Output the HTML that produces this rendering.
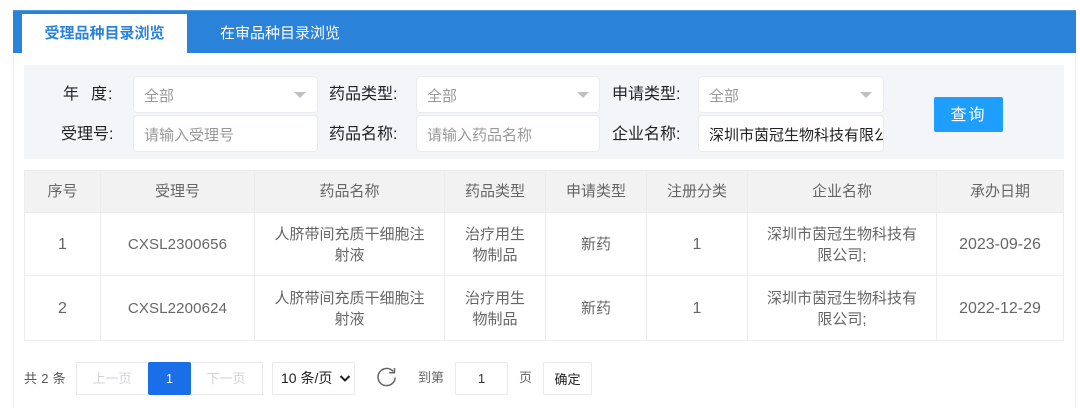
<!DOCTYPE html>
<html lang="zh"><head><meta charset="utf-8"><style>
html,body{margin:0;padding:0;background:#fff}
body{width:1080px;height:408px;position:relative;overflow:hidden;font-family:"Liberation Sans","Noto Sans CJK SC",sans-serif;color:#333;filter:blur(.3px)}
.a{position:absolute;box-sizing:border-box}
.t{position:absolute;white-space:nowrap;text-align:center}
.f{background:#fff;border:1px solid #e8eaee;border-radius:4px;font-size:15px;line-height:39px;padding-left:10px;color:#999;overflow:hidden;white-space:nowrap}
.c{position:absolute;border-left:6px solid transparent;border-right:6px solid transparent;border-top:6px solid #c0c0c0}
.l{position:absolute;font-size:16px;line-height:20px;color:#222;white-space:nowrap}
.v{position:absolute;background:#ececec;width:1px;top:170px;height:170px}
.h{position:absolute;background:#ececec;height:1px;left:24px;width:1040px}
.cell{position:absolute;font-size:15px;line-height:21px;color:#666;text-align:center}
.n{font-size:15px;letter-spacing:.15px}
.hd{position:absolute;font-size:15px;line-height:22px;color:#666;text-align:center;top:181px}
</style></head><body>
<div class="a" style="left:13px;top:10px;width:1063px;height:398px;border-left:1px solid #e6eefa;border-right:1px solid #e6eefa"></div>
<div class="a" style="left:13px;top:10px;width:1063px;height:43px;background:#2b82d9;border-top:1px solid #4f97e0"></div>
<div class="a" style="left:22px;top:14px;width:165px;height:39px;background:#fff"></div>
<div class="t" style="left:22px;top:22px;width:165px;font-size:15px;line-height:24px;color:#2b82d9;font-weight:700">受理品种目录浏览</div>
<div class="t" style="left:187px;top:22px;width:186px;font-size:15px;line-height:24px;color:#fff">在审品种目录浏览</div>

<div class="a" style="left:24px;top:65px;width:1040px;height:94px;background:#f4f5f9"></div>
<div class="l" style="left:63px;top:85px">年<span style="margin-left:12px">度</span><span style="margin-left:1px">:</span></div>
<div class="l" style="left:61px;top:125px">受理号:</div>
<div class="l" style="left:329px;top:85px">药品类型:</div>
<div class="l" style="left:329px;top:125px">药品名称:</div>
<div class="l" style="left:612px;top:85px">申请类型:</div>
<div class="l" style="left:612px;top:125px">企业名称:</div>
<div class="a f" style="left:133px;top:76px;width:185px;height:37px">全部</div>
<div class="a f" style="left:416px;top:76px;width:184px;height:37px">全部</div>
<div class="a f" style="left:698px;top:76px;width:186px;height:37px">全部</div>
<div class="c" style="left:294px;top:92px"></div>
<div class="c" style="left:577px;top:92px"></div>
<div class="c" style="left:860px;top:92px"></div>
<div class="a f" style="left:133px;top:115px;width:185px;height:37px">请输入受理号</div>
<div class="a f" style="left:416px;top:115px;width:184px;height:37px">请输入药品名称</div>
<div class="a f" style="left:698px;top:115px;width:186px;height:37px;color:#222">深圳市茵冠生物科技有限公司</div>
<div class="a" style="left:934px;top:97px;width:69px;height:35px;background:#1e9fff;border-radius:2px;color:#fff;font-size:16px;line-height:37px;text-align:center;letter-spacing:2px">查询</div>

<div class="a" style="left:24px;top:170px;width:1040px;height:42px;background:#f2f2f2"></div>
<div class="h" style="top:170px"></div><div class="h" style="top:212px"></div><div class="h" style="top:275px"></div><div class="h" style="top:340px"></div>
<div class="v" style="left:24px"></div><div class="v" style="left:100px"></div><div class="v" style="left:254px"></div><div class="v" style="left:444px"></div><div class="v" style="left:545px"></div><div class="v" style="left:646px"></div><div class="v" style="left:747px"></div><div class="v" style="left:936px"></div><div class="v" style="left:1063px"></div>

<div class="hd" style="left:24px;width:77px">序号</div>
<div class="hd" style="left:101px;width:153px">受理号</div>
<div class="hd" style="left:255px;width:189px">药品名称</div>
<div class="hd" style="left:445px;width:100px">药品类型</div>
<div class="hd" style="left:546px;width:100px">申请类型</div>
<div class="hd" style="left:647px;width:100px">注册分类</div>
<div class="hd" style="left:748px;width:188px">企业名称</div>
<div class="hd" style="left:937px;width:126px">承办日期</div>

<div class="cell" style="left:24px;width:77px;top:234px;font-size:16px">1</div>
<div class="cell n" style="left:101px;width:153px;top:234px">CXSL2300656</div>
<div class="cell" style="left:255px;width:189px;top:224px">人脐带间充质干细胞注<br>射液</div>
<div class="cell" style="left:445px;width:100px;top:224px">治疗用生<br>物制品</div>
<div class="cell" style="left:546px;width:100px;top:234px">新药</div>
<div class="cell" style="left:647px;width:100px;top:234px;font-size:16px">1</div>
<div class="cell" style="left:748px;width:188px;top:224px">深圳市茵冠生物科技有<br>限公司;</div>
<div class="cell" style="left:937px;width:126px;top:234px;font-size:16px">2023-09-26</div>

<div class="cell" style="left:24px;width:77px;top:298px;font-size:16px">2</div>
<div class="cell n" style="left:101px;width:153px;top:298px">CXSL2200624</div>
<div class="cell" style="left:255px;width:189px;top:288px">人脐带间充质干细胞注<br>射液</div>
<div class="cell" style="left:445px;width:100px;top:288px">治疗用生<br>物制品</div>
<div class="cell" style="left:546px;width:100px;top:298px">新药</div>
<div class="cell" style="left:647px;width:100px;top:298px;font-size:16px">1</div>
<div class="cell" style="left:748px;width:188px;top:288px">深圳市茵冠生物科技有<br>限公司;</div>
<div class="cell" style="left:937px;width:126px;top:298px;font-size:16px">2022-12-29</div>

<div class="t" style="left:24px;top:369px;font-size:13px;line-height:20px;color:#555;letter-spacing:.3px">共 2 条</div>
<div class="a" style="left:76px;top:362px;width:187px;height:33px;border:1px solid #e8e8ee"></div>
<div class="t" style="left:76px;top:369px;width:72px;font-size:13px;line-height:20px;color:#d0d3d8">上一页</div>
<div class="a" style="left:148px;top:362px;width:43px;height:33px;background:#1a6ee8;border-radius:2px;color:#fff;font-size:13px;line-height:33px;text-align:center">1</div>
<div class="t" style="left:190px;top:369px;width:72px;font-size:13px;line-height:20px;color:#d0d3d8">下一页</div>
<div class="a" style="left:272px;top:362px;width:83px;height:33px;border:1px solid #e8e8ee;border-radius:2px"></div>
<div class="t" style="left:281px;top:368px;font-size:14px;line-height:20px;color:#222">10 条/页</div>
<svg class="a" style="left:339px;top:374px" width="12" height="9" viewBox="0 0 12 9"><path d="M1.5 2 L6 6.5 L10.5 2" fill="none" stroke="#222" stroke-width="2"/></svg>
<svg class="a" style="left:375px;top:365px" width="24" height="24" viewBox="0 0 24 24"><path d="M18.2 6.5 A8.6 8.6 0 1 0 20.2 12.5" fill="none" stroke="#666" stroke-width="1.5"/><path d="M19.5 3 V7.8 H14.2" fill="none" stroke="#666" stroke-width="1.5"/></svg>
<div class="t" style="left:418px;top:368px;font-size:13px;line-height:20px;color:#666">到第</div>
<div class="a" style="left:455px;top:362px;width:53px;height:33px;border:1px solid #e8e8ee;border-radius:2px;font-size:13px;line-height:31px;text-align:center;color:#333">1</div>
<div class="t" style="left:519px;top:368px;font-size:13px;line-height:20px;color:#666">页</div>
<div class="a" style="left:543px;top:362px;width:49px;height:33px;border:1px solid #e8e8ee;border-radius:2px;font-size:13px;line-height:34px;text-align:center;color:#222">确定</div>
</body></html>
